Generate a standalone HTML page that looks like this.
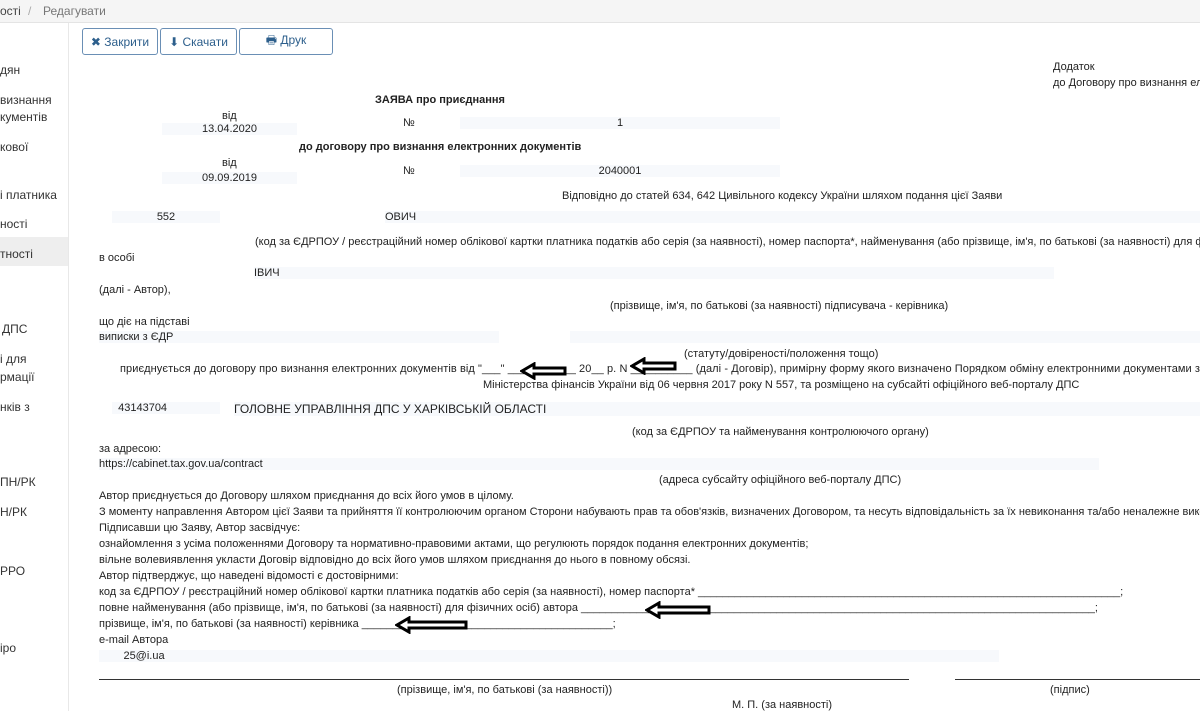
<!DOCTYPE html>
<html><head><meta charset="utf-8"><style>
body{margin:0;width:1200px;height:711px;overflow:hidden;background:#fff;font-family:"Liberation Sans",Arial,sans-serif;font-size:11px;color:#222;position:relative}
.a{position:absolute;white-space:nowrap}
.top{position:absolute;left:0;top:0;width:1200px;height:22px;background:#f5f5f5;border-bottom:1px solid #e4e4e4}
.side{position:absolute;left:0;top:23px;width:68px;height:688px;background:#fff;border-right:1px solid #e8e8e8;font-size:12px;color:#333}
.btn{position:absolute;top:28px;height:27px;border:1px solid #6a8fb5;border-radius:3px;background:#fff;font-size:12px;color:#2d5f8c;display:flex;align-items:center;justify-content:center;box-sizing:border-box}
.sh{background:#f7f9fc}
b{font-weight:bold}
.ln{position:absolute;border-top:1px solid #333}
</style></head><body>
<div class="top"><span class="a" style="left:0;top:4px;font-size:12px;color:#444">ості</span><span class="a" style="left:28px;top:4px;color:#aaa;font-size:12px">/</span><span class="a" style="left:43px;top:4px;font-size:12px;color:#777">Редагувати</span></div>
<div class="side">
<div class="a" style="left:0;top:40px">дян</div>
<div class="a" style="left:0;top:70px">визнання</div>
<div class="a" style="left:0;top:87px">кументів</div>
<div class="a" style="left:0;top:117px">кової</div>
<div class="a" style="left:0;top:165px">і платника</div>
<div class="a" style="left:0;top:194px">ності</div>
<div style="position:absolute;left:0;top:214px;width:68px;height:29px;background:#eee"></div>
<div class="a" style="left:0;top:224px">тності</div>
<div class="a" style="left:2px;top:299px">ДПС</div>
<div class="a" style="left:0;top:329px">і для</div>
<div class="a" style="left:0;top:347px">рмації</div>
<div class="a" style="left:0;top:377px">нків з</div>
<div class="a" style="left:0;top:452px">ПН/РК</div>
<div class="a" style="left:0;top:482px">Н/РК</div>
<div class="a" style="left:0;top:541px">РРО</div>
<div class="a" style="left:0;top:618px">іро</div>
</div>
<div class="btn" style="left:82px;width:76px">✖ Закрити</div>
<div class="btn" style="left:160px;width:77px">⬇ Скачати</div>
<div class="btn" style="left:239px;width:94px">🖶 Друк</div>
<div class="a" style="left:1053px;top:61px">Додаток</div>
<div class="a" style="left:1053px;top:77px">до Договору про визнання ел</div>
<div class="a" style="left:375px;top:94px"><b>ЗАЯВА про приєднання</b></div>
<div class="a" style="left:222px;top:110px">від</div>
<div class="a sh" style="left:162px;top:123px;width:135px;text-align:center">13.04.2020</div>
<div class="a" style="left:403px;top:117px">№</div>
<div class="a sh" style="left:460px;top:117px;width:320px;text-align:center">1</div>
<div class="a" style="left:299px;top:141px"><b>до договору про визнання електронних документів</b></div>
<div class="a" style="left:222px;top:157px">від</div>
<div class="a sh" style="left:162px;top:172px;width:135px;text-align:center">09.09.2019</div>
<div class="a" style="left:403px;top:165px">№</div>
<div class="a sh" style="left:460px;top:165px;width:320px;text-align:center">2040001</div>
<div class="a" style="left:562px;top:190px">Відповідно до статей 634, 642 Цивільного кодексу України шляхом подання цієї Заяви</div>
<div class="a sh" style="left:112px;top:211px;width:108px;text-align:center">552</div>
<div class="a sh" style="left:385px;top:211px;width:815px">ОВИЧ</div>
<div class="a" style="left:255px;top:236px">(код за ЄДРПОУ / реєстраційний номер облікової картки платника податків або серія (за наявності), номер паспорта*, найменування (або прізвище, ім'я, по батькові (за наявності) для ф</div>
<div class="a" style="left:99px;top:252px">в особі</div>
<div class="a sh" style="left:254px;top:267px;width:800px">ІВИЧ</div>
<div class="a" style="left:99px;top:284px">(далі - Автор),</div>
<div class="a" style="left:610px;top:300px">(прізвище, ім'я, по батькові (за наявності) підписувача - керівника)</div>
<div class="a" style="left:99px;top:316px">що діє на підставі</div>
<div class="a sh" style="left:99px;top:331px;width:400px">виписки з ЄДР</div>
<div class="a sh" style="left:570px;top:331px;width:630px">&nbsp;</div>
<div class="a" style="left:684px;top:348px">(статуту/довіреності/положення тощо)</div>
<div class="a" style="left:120px;top:363px;letter-spacing:0.08px">приєднується до договору про визнання електронних документів від "___" ___________ 20__ р. N __________ (далі - Договір), примірну форму якого визначено Порядком обміну електронними документами з ко</div>
<div class="a" style="left:483px;top:379px">Міністерства фінансів України від 06 червня 2017 року N 557, та розміщено на субсайті офіційного веб-порталу ДПС</div>
<svg class="a" style="left:520px;top:362px" width="50" height="18"><path d="M2 9 L14 2 L14 6 L45 6 L45 12 L14 12 L14 16 Z" fill="#fff" stroke="#000" stroke-width="3"/></svg>
<svg class="a" style="left:630px;top:357px" width="50" height="18"><path d="M2 9 L14 2 L14 6 L45 6 L45 12 L14 12 L14 16 Z" fill="#fff" stroke="#000" stroke-width="3"/></svg>
<div class="a sh" style="left:112px;top:402px;width:108px">&nbsp;&nbsp;43143704</div>
<div class="a sh" style="left:234px;top:402px;width:966px;font-size:12px">ГОЛОВНЕ УПРАВЛІННЯ ДПС У ХАРКІВСЬКІЙ ОБЛАСТІ</div>
<div class="a" style="left:632px;top:426px">(код за ЄДРПОУ та найменування контролюючого органу)</div>
<div class="a" style="left:99px;top:443px">за адресою:</div>
<div class="a sh" style="left:99px;top:458px;width:1000px">https://cabinet.tax.gov.ua/contract</div>
<div class="a" style="left:659px;top:474px">(адреса субсайту офіційного веб-порталу ДПС)</div>
<div class="a" style="left:99px;top:490px">Автор приєднується до Договору шляхом приєднання до всіх його умов в цілому.</div>
<div class="a" style="left:99px;top:506px">З моменту направлення Автором цієї Заяви та прийняття її контролюючим органом Сторони набувають прав та обов'язків, визначених Договором, та несуть відповідальність за їх невиконання та/або неналежне вико</div>
<div class="a" style="left:99px;top:522px">Підписавши цю Заяву, Автор засвідчує:</div>
<div class="a" style="left:99px;top:538px">ознайомлення з усіма положеннями Договору та нормативно-правовими актами, що регулюють порядок подання електронних документів;</div>
<div class="a" style="left:99px;top:554px">вільне волевиявлення укласти Договір відповідно до всіх його умов шляхом приєднання до нього в повному обсязі.</div>
<div class="a" style="left:99px;top:570px">Автор підтверджує, що наведені відомості є достовірними:</div>
<div class="a" style="left:99px;top:586px">код за ЄДРПОУ / реєстраційний номер облікової картки платника податків або серія (за наявності), номер паспорта* _____________________________________________________________________;</div>
<div class="a" style="left:99px;top:602px">повне найменування (або прізвище, ім'я, по батькові (за наявності) для фізичних осіб) автора ____________________________________________________________________________________;</div>
<div class="a" style="left:99px;top:618px">прізвище, ім'я, по батькові (за наявності) керівника _________________________________________;</div>
<svg class="a" style="left:645px;top:601px" width="68" height="18"><path d="M2 9 L14 2 L14 6 L64 6 L64 12 L14 12 L14 16 Z" fill="#fff" stroke="#000" stroke-width="3"/></svg>
<svg class="a" style="left:395px;top:616px" width="75" height="18"><path d="M2 9 L14 2 L14 6 L71 6 L71 12 L14 12 L14 16 Z" fill="#fff" stroke="#000" stroke-width="3"/></svg>
<div class="a" style="left:99px;top:634px">e-mail Автора</div>
<div class="a sh" style="left:99px;top:650px;width:900px">&nbsp;&nbsp;&nbsp;&nbsp;&nbsp;&nbsp;&nbsp;&nbsp;25@i.ua</div>
<div class="ln" style="left:99px;top:679px;width:810px"></div>
<div class="ln" style="left:955px;top:679px;width:245px"></div>
<div class="a" style="left:397px;top:684px">(прізвище, ім'я, по батькові (за наявності))</div>
<div class="a" style="left:1050px;top:684px">(підпис)</div>
<div class="a" style="left:732px;top:699px">М. П. (за наявності)</div>
</body></html>
